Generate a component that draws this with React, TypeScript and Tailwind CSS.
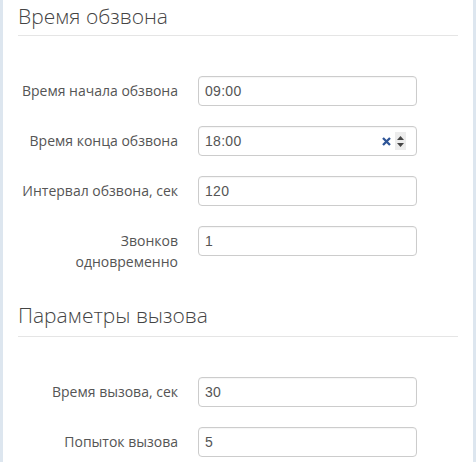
import React from 'react';

type Row = { label: React.ReactNode; value: string; clear?: boolean };

const callTime: Row[] = [
  { label: 'Время начала обзвона', value: '09:00' },
  { label: 'Время конца обзвона', value: '18:00', clear: true },
  { label: 'Интервал обзвона, сек', value: '120' },
  { label: <>Звонков<br />одновременно</>, value: '1' },
];

const callParams: Row[] = [
  { label: 'Время вызова, сек', value: '30' },
  { label: 'Попыток вызова', value: '5' },
];

const FieldRow: React.FC<{ row: Row }> = ({ row }) => (
  <div className="grid grid-cols-[160px_219px] gap-x-5">
    <label className="text-right text-[14px] leading-[21px] pt-[4px] text-[#555]">{row.label}</label>
    <div className="h-[30px] flex items-center border border-[#ccc] rounded-[4px] bg-white pl-[6px] pr-[10px] shadow-[inset_0_1px_1px_rgba(0,0,0,0.04)]">
      <span className="flex-1 text-[14px] tracking-[0.3px] text-[#555] font-['Liberation_Sans',Arial,sans-serif]">{row.value}</span>
      {row.clear && (
        <div className="flex items-center gap-[4px]">
          <svg width="9" height="9" viewBox="0 0 9 9">
            <path d="M1 1 L8 8 M8 1 L1 8" stroke="#2e5597" strokeWidth="2.3" />
          </svg>
          <div className="w-[11px] h-[18px] bg-[#ececec] flex flex-col items-center justify-center gap-[3px]">
            <svg width="7" height="4" viewBox="0 0 7 4"><path d="M0 4 L3.5 0 L7 4 Z" fill="#444" /></svg>
            <svg width="7" height="4" viewBox="0 0 7 4"><path d="M0 0 L3.5 4 L7 0 Z" fill="#444" /></svg>
          </div>
        </div>
      )}
    </div>
  </div>
);

const Section: React.FC<{ title: string; rows: Row[]; className?: string; headClass: string }> = ({ title, rows, className, headClass }) => (
  <section className={className}>
    <h2 className={`text-[21px] leading-[24px] font-light text-[#444] font-['Open_Sans_Light','Open_Sans',sans-serif] border-b border-[#e5e5e5] ${headClass}`}>
      {title}
    </h2>
    <div className="mt-10 flex flex-col gap-5">
      {rows.map((r, i) => (
        <FieldRow key={i} row={r} />
      ))}
    </div>
  </section>
);

export default function App() {
  return (
    <div className="w-[476px] h-[462px] overflow-hidden bg-[#dde6ef] px-[3px] font-['Open_Sans',sans-serif]">
      <div className="bg-white h-full px-[15px] pt-[4px]">
        <Section title="Время обзвона" rows={callTime} headClass="pb-[7px]" />
        <Section title="Параметры вызова" rows={callParams} headClass="pb-[9px]" className="mt-[31px]" />
      </div>
    </div>
  );
}
